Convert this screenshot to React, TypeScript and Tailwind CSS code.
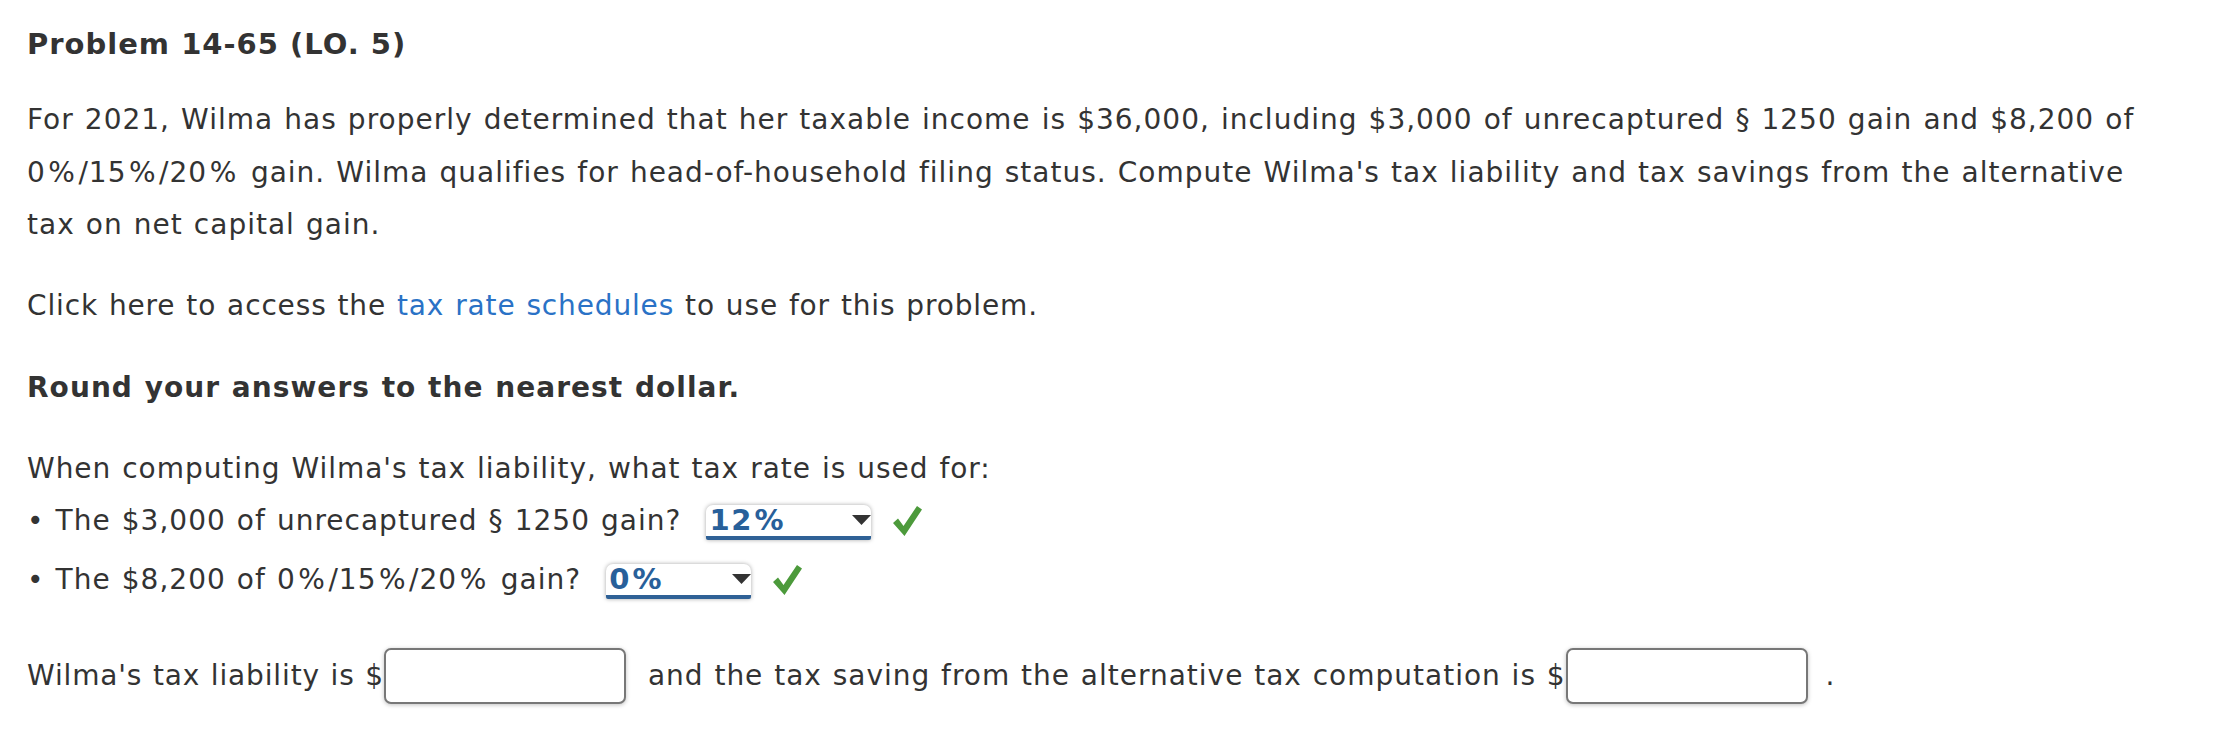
import React from "react";

// Verdana's % is wider than DejaVu's; pad it so the lines keep the same length
function Pct() {
  return <span className="px-[2.5px]">%</span>;
}

function Check() {
  return (
    <svg width="29" height="30" viewBox="0 0 29 30" className="shrink-0">
      <path d="M0 17 L5 12.5 L10.5 20 L24 0 L29 3.5 L11.5 30 Z" fill="#4c9a3b" />
    </svg>
  );
}

function RateSelect({ value, width }: { value: string; width: string }) {
  return (
    <span
      className={`relative inline-flex h-[35px] items-center rounded-t-[7px] rounded-b-[2px] bg-white pl-[3px] shadow-[0_0_4px_rgba(0,0,0,0.35)] border-b-[4px] border-[#2f6196] ${width}`}
    >
      <span className="text-[29px] font-bold leading-none tracking-[1.6px] text-[#28609a]">
        {value}
        <span className="px-[1.5px]">%</span>
      </span>
      <svg width="19" height="10" viewBox="0 0 19 10" className="absolute right-0 top-[10px]">
        <path d="M0 0 H19 L9.5 10 Z" fill="#333" />
      </svg>
    </span>
  );
}

function AnswerBox() {
  return (
    <span className="inline-block h-[56px] w-[242px] rounded-[7px] border-2 border-[#777] bg-white shadow-[0_1px_4px_rgba(0,0,0,0.25)]" />
  );
}

export default function App() {
  return (
    <div
      className="min-h-[738px] w-[2218px] bg-white pl-[27px] pt-[18px] text-[28px] tracking-[1px] [word-spacing:1.2px] text-[#333]"
      style={{ fontFamily: '"DejaVu Sans", Verdana, sans-serif' }}
    >
      <h1 className="text-[29px] font-bold leading-[52px] tracking-[1px] [word-spacing:0px]">Problem 14-65 (LO. 5)</h1>

      <p className="mt-[24px] leading-[52.5px] whitespace-nowrap">
        For 2021, Wilma has properly determined that her taxable income is $36,000, including $3,000 of unrecaptured §
        1250 gain and $8,200 of
        <br />
        0<Pct />/15<Pct />/20<Pct /> gain. Wilma qualifies for head-of-household filing status. Compute Wilma's tax
        liability and tax savings from the alternative
        <br />
        tax on net capital gain.
      </p>

      <p className="mt-[28px] leading-[52.5px] tracking-[0.85px]">
        Click here to access the <span className="text-[#2a72c6]">tax rate schedules</span> to use for this problem.
      </p>

      <p className="mt-[30px] font-bold leading-[52.5px] tracking-[1.05px] [word-spacing:0.9px]">
        Round your answers to the nearest dollar.
      </p>

      <p className="mt-[28px] leading-[52.5px] tracking-[0.95px]">
        When computing Wilma's tax liability, what tax rate is used for:
      </p>

      <div className="flex h-[52px] items-center">
        <span>• The $3,000 of unrecaptured § 1250 gain?</span>
        <span className="ml-[25px]">
          <RateSelect value="12" width="w-[165px]" />
        </span>
        <span className="ml-[22px]">
          <Check />
        </span>
      </div>

      <div className="mt-[7px] flex h-[52px] items-center">
        <span>
          • The $8,200 of 0<Pct />/15<Pct />/20<Pct /> gain?
        </span>
        <span className="ml-[25px]">
          <RateSelect value="0" width="w-[145px]" />
        </span>
        <span className="ml-[22px]">
          <Check />
        </span>
      </div>

      <div className="mt-[42px] flex items-center [word-spacing:0.9px]">
        <span className="tracking-[0.85px]">Wilma's tax liability is $</span>
        <AnswerBox />
        <span className="ml-[22px]">and the tax saving from the alternative tax computation is $</span>
        <AnswerBox />
        <span className="ml-[18px]">.</span>
      </div>
    </div>
  );
}
